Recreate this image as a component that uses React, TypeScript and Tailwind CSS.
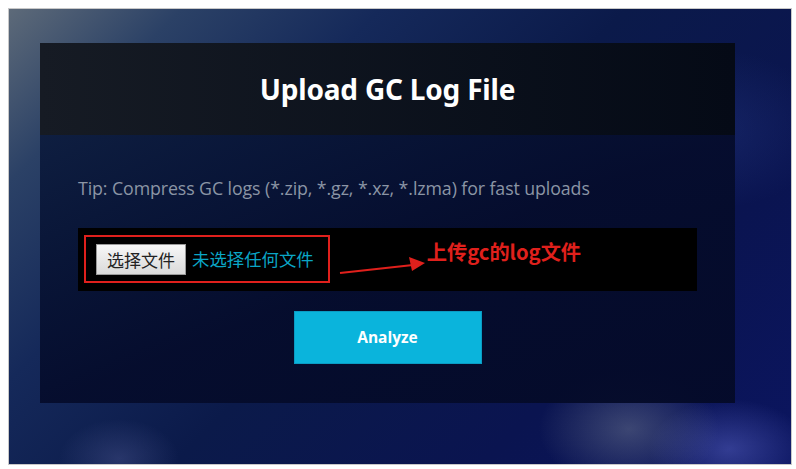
import React from "react";

export default function App() {
  return (
    <div className="w-[796px] h-[469px] bg-white p-2" style={{ fontFamily: '"Open Sans", "Noto Sans", sans-serif' }}>
      <div
        className="relative w-[784px] h-[457px] border border-[#c8c8c8] overflow-hidden pt-[34px] pl-[31px]"
        style={{
          backgroundImage:
            "radial-gradient(ellipse 90px 60px at 620px 420px, rgba(120,130,150,0.45), rgba(0,0,0,0) 100%), radial-gradient(ellipse 80px 50px at 720px 440px, rgba(90,100,200,0.5), rgba(0,0,0,0) 100%), radial-gradient(ellipse 60px 40px at 110px 450px, rgba(90,100,160,0.35), rgba(0,0,0,0) 100%), radial-gradient(ellipse 120px 80px at 700px 120px, rgba(40,60,140,0.35), rgba(0,0,0,0) 100%), linear-gradient(135deg, #5d6a79 0%, #2b4166 14%, #15295a 30%, #0b1a4a 50%, #0a1450 75%, #0b1560 100%)",
        }}
      >
        <div className="w-[695px] flex flex-col">
          <div className="h-[92px] flex items-center justify-center bg-gradient-to-r from-[#161b24] to-[#050a16]">
            <h1 className="text-white font-bold text-[28px] tracking-[-0.2px]" style={{ fontFamily: '"Noto Sans", "Open Sans", sans-serif' }}>
              Upload GC Log File
            </h1>
          </div>
          <div className="h-[268px] bg-gradient-to-br from-[#0b1a3c]/90 via-[#050c2c]/95 to-[#040a28]/95 px-[38px] pt-[41px] flex flex-col">
            <p className="text-[#8b95a5] text-[17.8px] leading-[24px] tracking-[-0.1px] whitespace-nowrap">
              Tip: Compress GC logs (*.zip, *.gz, *.xz, *.lzma) for fast uploads
            </p>
            <div className="mt-[28px] h-[63px] bg-black flex items-start pl-[6px] pt-[7px]">
              <div className="h-[48px] border-2 border-[#e0201c] flex items-start pl-[10px] pt-[7px] pr-[14px]">
                <button className="h-[31px] w-[90px] border border-[#9a9a9a] bg-gradient-to-b from-[#f7f7f7] to-[#dadada] text-[#222] text-[17px] leading-none" style={{ fontFamily: '"Noto Sans CJK SC", sans-serif' }}>
                  选择文件
                </button>
                <span className="ml-[6px] mt-[3px] text-[#0aa6c6] text-[17.4px] leading-[24px] whitespace-nowrap" style={{ fontFamily: '"Noto Sans CJK SC", sans-serif' }}>
                  未选择任何文件
                </span>
              </div>
              <svg width="88" height="20" viewBox="0 0 88 20" className="ml-[9px] mt-[20px]">
                <line x1="1" y1="18" x2="74" y2="10" stroke="#e0201c" strokeWidth="2" />
                <polygon points="86,8 70,2 73,16" fill="#e0201c" />
              </svg>
              <span className="mt-[4px] text-[#e0201c] text-[20.2px] leading-[26px] font-semibold whitespace-nowrap" style={{ fontFamily: '"Noto Sans CJK SC", sans-serif' }}>
                上传gc的log文件
              </span>
            </div>
            <div className="mt-[20px] flex justify-center">
              <button className="w-[188px] h-[53px] bg-[#0ab4dc] border border-[#0a9cc4] text-white font-bold text-[15.5px]">
                Analyze
              </button>
            </div>
          </div>
        </div>
      </div>
    </div>
  );
}
